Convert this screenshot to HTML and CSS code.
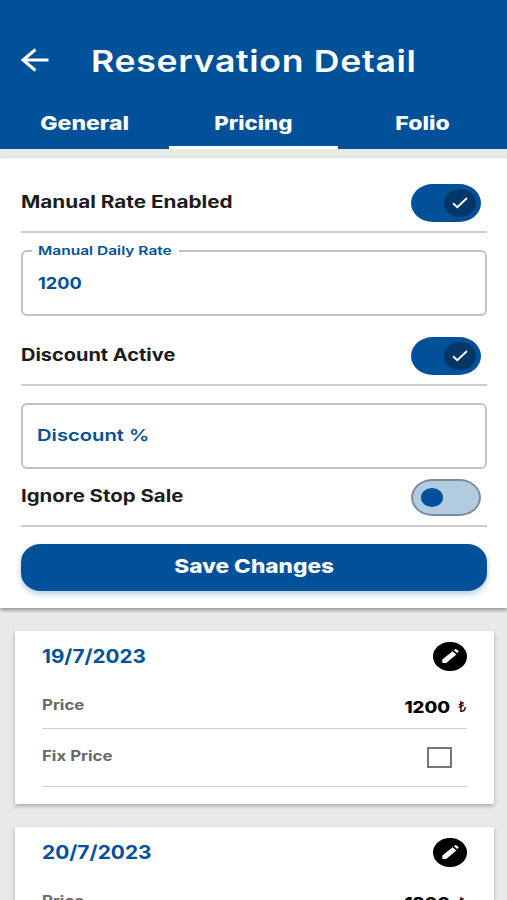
FILE: index.html
```html
<!DOCTYPE html>
<html lang="en">
<head>
<meta charset="utf-8">
<title>Reservation Detail</title>
<link rel="stylesheet" href="styles.css">
</head>
<body>
<div class="app">
  <header class="header">
    <div class="title-bar">
      <svg class="back" viewBox="0 0 28 24" role="img" aria-label="Back"><path d="M27.5 12H2M14.5 1.5L2 12l12.5 10.5"/></svg>
      <h1 class="title">Reservation Detail</h1>
    </div>
    <nav class="tabs">
      <div class="tab tab-general"><span>General</span></div>
      <div class="tab tab-pricing active"><span>Pricing</span></div>
      <div class="tab tab-folio"><span>Folio</span></div>
    </nav>
  </header>

  <section class="settings">
    <div class="setting first">
      <span class="label label-manual">Manual Rate Enabled</span>
      <span class="toggle on"><span class="knob"><svg viewBox="0 0 16 12"><path d="M1 6.3l4.3 4L15 1"/></svg></span></span>
    </div>
    <div class="field rate">
      <span class="float-label"><span>Manual Daily Rate</span></span>
      <span class="value">1200</span>
    </div>
    <div class="setting second">
      <span class="label label-discount">Discount Active</span>
      <span class="toggle on"><span class="knob"><svg viewBox="0 0 16 12"><path d="M1 6.3l4.3 4L15 1"/></svg></span></span>
    </div>
    <div class="field discount">
      <span class="placeholder">Discount %</span>
    </div>
    <div class="setting third">
      <span class="label label-ignore">Ignore Stop Sale</span>
      <span class="toggle off"><span class="knob"></span></span>
    </div>
    <button class="save" type="button"><span>Save Changes</span></button>
  </section>

  <main class="days">
    <article class="card">
      <div class="card-head">
        <span class="date">19/7/2023</span>
        <span class="edit"><svg viewBox="0 0 34 30"><path d="M9.2 17.8L19.6 9.3l3.9 3.3-10.4 8.8H9.2zM20.8 8.4l1.3-1.1q.6-.4 1.2 0l2.3 1.9q.5.5 0 1l-1.2 1.1z"/></svg></span>
      </div>
      <div class="line price-line">
        <span class="key key-price">Price</span>
        <span class="amount"><b>1200</b><i>₺</i></span>
      </div>
      <div class="line fix-line">
        <span class="key key-fix">Fix Price</span>
        <span class="checkbox"></span>
      </div>
    </article>
    <article class="card">
      <div class="card-head">
        <span class="date date-wide">20/7/2023</span>
        <span class="edit"><svg viewBox="0 0 34 30"><path d="M9.2 17.8L19.6 9.3l3.9 3.3-10.4 8.8H9.2zM20.8 8.4l1.3-1.1q.6-.4 1.2 0l2.3 1.9q.5.5 0 1l-1.2 1.1z"/></svg></span>
      </div>
      <div class="line price-line">
        <span class="key key-price">Price</span>
        <span class="amount"><b>1200</b><i>₺</i></span>
      </div>
      <div class="line fix-line">
        <span class="key key-fix">Fix Price</span>
        <span class="checkbox"></span>
      </div>
    </article>
  </main>
</div>
</body>
</html>
```
FILE: styles.css
```css
:root {
  --blue: #005199;
  --band: #e8eae8;
}

* { box-sizing: border-box; }

body {
  margin: 0;
  background: var(--band);
  color: #1c1c1c;
  font-family: Inter, "Liberation Sans", sans-serif;
}

.app {
  height: 900px;
  overflow: hidden;
}

/* Header */
.header {
  height: 148.5px;
  background: var(--blue);
  color: #fff;
}

.title-bar {
  display: flex;
  align-items: center;
  height: 101px;
  padding: 19px 0 0 21px;
}

.back {
  width: 28px;
  height: 24px;
  fill: none;
  stroke: #fff;
  stroke-width: 3.1;
}

.title {
  margin: 1px 0 0 41.5px;
  font: 600 30.5px/40px Inter, sans-serif;
  letter-spacing: .6px;
  white-space: nowrap;
  transform: scaleX(1.167);
  transform-origin: left;
}

.tabs {
  display: grid;
  grid-template-columns: 1fr 1fr 1fr;
  height: 48px;
}

.tab {
  height: 48px;
  padding-top: 11px;
  text-align: center;
  font-size: 19px;
  font-weight: 800;
  line-height: 24px;
}

.tab span,
.label,
.value,
.placeholder,
.save span,
.date,
.key {
  display: inline-block;
  white-space: nowrap;
}

.tab span { transform: scaleX(1.21); }
.tab-pricing span { transform: scaleX(1.17); }
.tab.active { border-bottom: 3px solid #fff; }

/* Settings form */
.settings {
  position: relative;
  height: 449.5px;
  margin-top: 9.5px;
  padding: 0 20.5px 0 21px;
  background: #fff;
  box-shadow: 0 2px 4px rgba(0, 0, 0, .4);
}

.setting {
  display: flex;
  justify-content: space-between;
  align-items: center;
  padding-right: 5.5px;
  border-bottom: 2px solid #ccc;
}

.first { height: 74.5px; padding-top: 26px; padding-bottom: 9px; }
.second { height: 69.5px; padding-top: 21px; padding-bottom: 9px; }
.third { height: 58px; padding-top: 9.5px; padding-bottom: 9px; }

.label {
  margin-bottom: 2px;
  font-size: 17px;
  font-weight: 700;
  line-height: 22px;
  transform-origin: left;
}

.label-manual { transform: scaleX(1.22); }
.label-discount { transform: scaleX(1.174); }
.label-ignore { transform: scaleX(1.2); }

.toggle {
  display: flex;
  align-items: center;
  width: 70.5px;
  height: 37.5px;
  border-radius: 22px / 19px;
}

.toggle.on {
  justify-content: flex-end;
  padding-right: 5px;
  background: var(--blue);
}

.toggle.on .knob {
  display: flex;
  justify-content: center;
  align-items: center;
  width: 32.5px;
  height: 27.5px;
  border-radius: 50%;
  background: #003767;
}

.knob svg {
  width: 16px;
  height: 12px;
  fill: none;
  stroke: #fff;
  stroke-width: 1.9;
}

.toggle.off {
  padding-left: 8.5px;
  border: 2px solid #7b8d9c;
  background: #b2cbe1;
}

.toggle.off .knob {
  width: 22px;
  height: 19px;
  border-radius: 50%;
  background: var(--blue);
}

.field {
  position: relative;
  height: 66px;
  border: 2px solid #c2c2c2;
  border-radius: 6px;
  color: var(--blue);
  font-size: 16.5px;
}

.rate { margin-top: 17.5px; }
.discount { margin-top: 17.5px; }

.float-label {
  position: absolute;
  top: -9px;
  left: 9px;
  width: 147px;
  padding-left: 5.5px;
  background: #fff;
  font-size: 12.3px;
  font-weight: 600;
  line-height: 16px;
  white-space: nowrap;
}

.float-label span {
  display: inline-block;
  transform: scaleX(1.26);
  transform-origin: left;
}

.value {
  margin: 20px 0 0 14.5px;
  font-weight: 700;
  line-height: 22px;
  transform: scaleX(1.1);
  transform-origin: left;
}

.placeholder {
  margin: 19px 0 0 14px;
  font-weight: 600;
  line-height: 22px;
  transform: scaleX(1.225);
  transform-origin: left;
}

.save {
  display: block;
  width: 466px;
  height: 46.5px;
  margin-top: 17px;
  padding: 0 0 1px;
  border: 0;
  border-radius: 20px / 18px;
  background: var(--blue);
  box-shadow: 0 3px 6px rgba(0, 81, 153, .3);
  color: #fff;
  font: 800 19px/24px Inter, sans-serif;
}

.save span { transform: scaleX(1.19); }

/* Daily cards */
.days {
  display: flex;
  flex-direction: column;
  gap: 23px;
  padding: 23px 13.5px 0 14.5px;
}

.card {
  height: 173px;
  padding: 11px 27px 0 27px;
  background: #fff;
  box-shadow: 0 2px 4px rgba(0, 0, 0, .28);
}

.card-head {
  display: flex;
  justify-content: space-between;
  height: 42px;
}

.date {
  margin-top: 3px;
  color: var(--blue);
  font-size: 19px;
  font-weight: 700;
  line-height: 24px;
  transform: scaleX(1.089);
  transform-origin: left;
}

.date-wide { transform: scaleX(1.1); }

.edit {
  width: 34px;
  height: 29.5px;
  border-radius: 50%;
  background: #000;
}

.edit svg {
  display: block;
  width: 34px;
  height: 29.5px;
  fill: #fff;
}

.line {
  display: flex;
  justify-content: space-between;
  border-bottom: 1.5px solid #d0d0d0;
}

.price-line { height: 45px; }
.fix-line { height: 58px; }

.key {
  color: #686868;
  font-size: 14px;
  font-weight: 700;
  line-height: 20px;
  transform: scaleX(1.2);
  transform-origin: left;
}

.key-price { margin-top: 11px; }
.key-fix { margin-top: 17px; }

.amount {
  display: flex;
  align-items: center;
  height: 22px;
  margin-top: 12px;
  color: #000;
  line-height: 22px;
}

.amount b {
  margin-right: 7.5px;
  font-size: 16.3px;
  font-weight: 800;
  transform: scaleX(1.14);
  transform-origin: right;
}

.amount i {
  font-size: 14.5px;
  font-style: normal;
  font-weight: 400;
}

.checkbox {
  width: 25px;
  height: 21.5px;
  margin: 18px 14.5px 0 0;
  border: 2px solid #777;
}
```
